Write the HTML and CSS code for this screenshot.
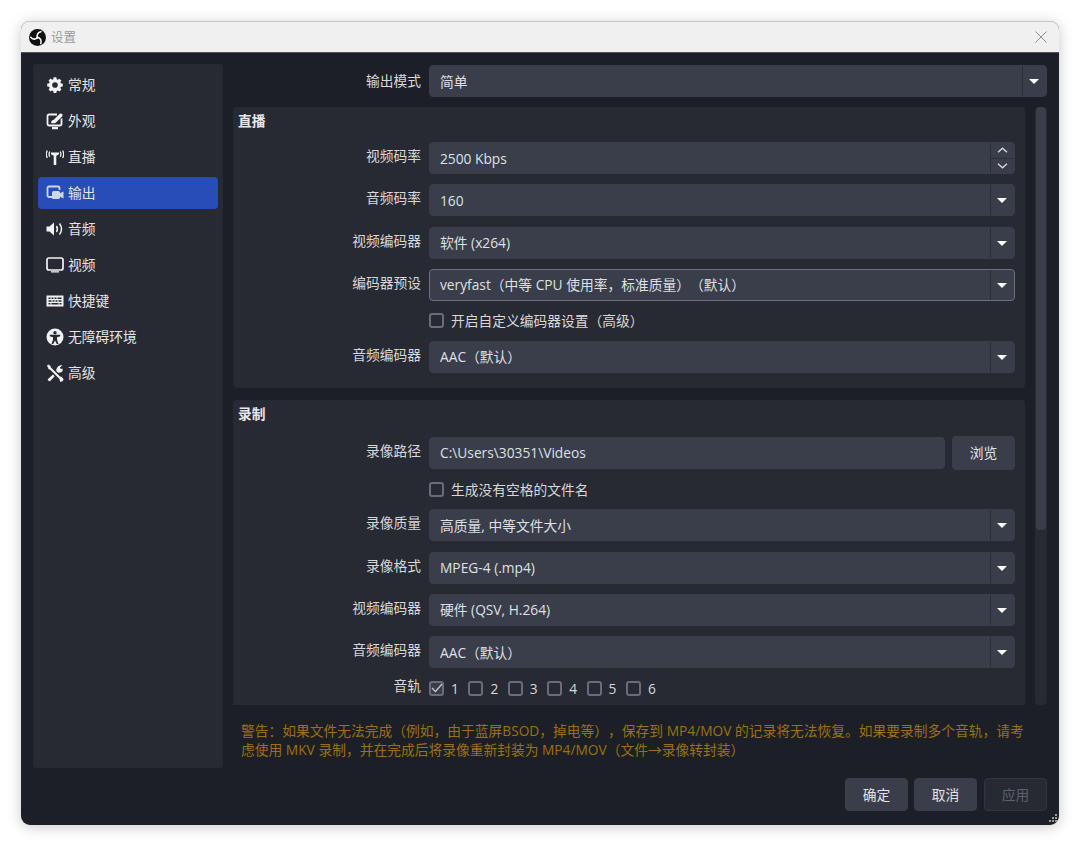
FILE: index.html
```html
<!DOCTYPE html>
<html lang="zh-CN">
<head>
    <meta charset="UTF-8">
    <title>设置</title>
    <link rel="stylesheet" href="styles.css">
</head>
<body>
    <div class="window">
        <div class="titlebar">
            <svg class="obs-logo" width="17" height="17" viewBox="0 0 24 24">
                <circle cx="12" cy="12" r="12" fill="#111"/>
                <g fill="none" stroke="#fff" stroke-width="2.200" stroke-linecap="round">
                    <path d="M12 12.500C10.500 8.500 12.500 4.500 17 3.800"/>
                    <path d="M12 12.500C10.500 8.500 12.500 4.500 17 3.800" transform="rotate(120 12 12)"/>
                    <path d="M12 12.500C10.500 8.500 12.500 4.500 17 3.800" transform="rotate(240 12 12)"/>
                </g>
            </svg>
            <span class="title-text">设置</span>
            <svg class="close-icon" width="12" height="12" viewBox="0 0 12 12">
                <path d="M.5.5l11 11M11.500.5l-11 11" stroke="#8c8c8c" stroke-width="1" fill="none"/>
            </svg>
        </div>

        <div class="dialog">
            <ul class="sidebar">
                <li class="nav-item">
                    <svg class="nav-icon" viewBox="-1.500 -1.500 21 21"><path fill="#f2f2f2" fill-rule="evenodd" d="M7.400 0h3.200l.4 2.300 1.300.6 1.900-1.300 2.300 2.300-1.300 1.900.6 1.300 2.300.4v3.200l-2.300.4-.6 1.300 1.300 1.900-2.300 2.300-1.900-1.300-1.300.6-.4 2.300H7.400l-.4-2.300-1.300-.6-1.900 1.300-2.300-2.300 1.300-1.900-.6-1.300-2.300-.4V7.400l2.300-.4.6-1.300-1.300-1.900 2.300-2.300 1.900 1.300 1.300-.6zM9 5.700a3.300 3.300 0 1 0 0 6.600 3.300 3.300 0 0 0 0-6.600z"/></svg>
                    常规
                </li>
                <li class="nav-item">
                    <svg class="nav-icon" viewBox="0 0 18 18"><path fill="none" stroke="#f2f2f2" stroke-width="1.800" d="M11 2.500H3A1.500 1.500 0 0 0 1.500 4v8A1.500 1.500 0 0 0 3 13.500h11a1.500 1.500 0 0 0 1.500-1.500V6.500"/><path fill="#f2f2f2" d="M6 15h6v2.200H6zM5 11c.2-2 1-2.800 2.500-3L14 1.500l2.500 0.500-.2 2.300L10 10.500c-1.200 1-3 1-5 .5z"/></svg>
                    外观
                </li>
                <li class="nav-item">
                    <svg class="nav-icon" viewBox="0 0 18 18"><g fill="none" stroke="#f2f2f2" stroke-width="1.300"><path d="M3.800 3.500C2.800 5.300 2.800 7 3.800 8.800M1.300 2.500C0 5 0 7.500 1.300 10M14.200 3.500c1 1.800 1 3.500 0 5.300M16.700 2.500C18 5 18 7.500 16.700 10"/></g><path fill="#f2f2f2" d="M5 4.500h8v1.700L10.300 7.800v9.200H7.700V7.800L5 6.200z"/></svg>
                    直播
                </li>
                <li class="nav-item active">
                    <svg class="nav-icon" viewBox="0 0 18 18"><path fill="none" stroke="#cdd6ee" stroke-width="1.800" d="M6 13H3a1.500 1.500 0 0 1-1.500-1.500V4A1.500 1.500 0 0 1 3 2.500h9A1.500 1.500 0 0 1 13.500 4v2"/><path fill="#cdd6ee" d="M6 8.500A1.500 1.500 0 0 1 7.500 7h5A1.500 1.500 0 0 1 14 8.500v.8l3.500-1.800v7l-3.500-1.800v.8a1.500 1.500 0 0 1-1.500 1.500h-5A1.500 1.500 0 0 1 6 13z"/></svg>
                    输出
                </li>
                <li class="nav-item">
                    <svg class="nav-icon" viewBox="0 0 18 18"><path fill="#f2f2f2" d="M.5 6.500h3L8 2.500v13l-4.500-4h-3z"/><g fill="none" stroke="#f2f2f2" stroke-width="1.500"><path d="M10.500 6c1.200 2 1.200 4 0 6"/><path d="M13.500 3.500c2.400 3.300 2.400 7.700 0 11"/></g></svg>
                    音频
                </li>
                <li class="nav-item">
                    <svg class="nav-icon" viewBox="0 0 18 18"><rect x="1" y="2" width="16" height="12" rx="2" fill="none" stroke="#f2f2f2" stroke-width="1.700"/><path fill="#f2f2f2" d="M5 15.200h8v1.300H5z"/></svg>
                    视频
                </li>
                <li class="nav-item">
                    <svg class="nav-icon" viewBox="0 0 18 18"><path fill="#f2f2f2" fill-rule="evenodd" d="M.5 3.500h17v11H.5zM2.500 5.500v1.500h2V5.500zm3 0v1.500h2V5.500zm3 0v1.500h2V5.500zm3 0v1.500h4V5.500zM2.500 8.200v1.500h3V8.200zm4 0v1.500h2V8.200zm3 0v1.500h2V8.200zm3 0v1.500h3V8.200zM2.500 11v1.500h2V11zm3 0v1.500h7V11zm8 0v1.500h2V11z"/></svg>
                    快捷键
                </li>
                <li class="nav-item">
                    <svg class="nav-icon" viewBox="0 0 18 18"><circle cx="9" cy="9" r="8.500" fill="#f2f2f2"/><circle cx="9" cy="4.800" r="1.700" fill="#272a33"/><path fill="#272a33" d="M3.800 6.800h10.400v1.500L11 9.200v2.500l1.500 4.300h-1.700L9 12.500 7.200 16H5.500L7 11.700V9.200L3.800 8.300z"/></svg>
                    无障碍环境
                </li>
                <li class="nav-item">
                    <svg class="nav-icon" viewBox="0 0 18 18"><path fill="#f2f2f2" d="M1 1.500l1.500-1 2 1.500.5 1.500 9 9 1.500.3 2 2.200a2.500 2.500 0 0 1-3.500 2.500l-.5-2.500-9-9L2.500 5zM16.500 1.200l-2.500 2.300.8 1.500 1.800-.3c.5 2-.5 3.500-2.500 3.800l-2 .2-1.800-1.700c-.2-3 2-6.300 6.200-5.800zM7 10.500l1.700 1.700-4.500 4.800c-1 1-3.200-1-2.200-2z"/></svg>
                    高级
                </li>
            </ul>

            <div class="main">
                <div class="form-row top-row">
                    <label class="row-label">输出模式</label>
                    <div class="combo"><span class="combo-text">简单</span><span class="combo-arrow"></span></div>
                </div>

                <div class="scroll-area">
                    <div class="scroll-content">
                        <section class="group">
                            <h2 class="group-title">直播</h2>
                            <div class="form-row">
                                <label class="row-label">视频码率</label>
                                <div class="combo">
                                    <span class="combo-text">2500 Kbps</span>
                                    <span class="spin-btns">
                                        <span class="spin-up"><svg width="11" height="6" viewBox="0 0 11 6"><path d="M1 5.200l4.500-4 4.500 4" fill="none" stroke="#d8d8d8" stroke-width="1.400"/></svg></span>
                                        <span class="spin-down"><svg width="11" height="6" viewBox="0 0 11 6"><path d="M1 .8l4.500 4 4.500-4" fill="none" stroke="#d8d8d8" stroke-width="1.400"/></svg></span>
                                    </span>
                                </div>
                            </div>
                            <div class="form-row">
                                <label class="row-label">音频码率</label>
                                <div class="combo"><span class="combo-text">160</span><span class="combo-arrow"></span></div>
                            </div>
                            <div class="form-row">
                                <label class="row-label">视频编码器</label>
                                <div class="combo"><span class="combo-text">软件 (x264)</span><span class="combo-arrow"></span></div>
                            </div>
                            <div class="form-row">
                                <label class="row-label">编码器预设</label>
                                <div class="combo focused"><span class="combo-text">veryfast（中等 CPU 使用率，标准质量）（默认）</span><span class="combo-arrow"></span></div>
                            </div>
                            <div class="form-row check-row">
                                <span class="check-item"><span class="checkbox"></span>开启自定义编码器设置（高级）</span>
                            </div>
                            <div class="form-row">
                                <label class="row-label">音频编码器</label>
                                <div class="combo"><span class="combo-text">AAC（默认）</span><span class="combo-arrow"></span></div>
                            </div>
                        </section>

                        <section class="group record-group">
                            <h2 class="group-title">录制</h2>
                            <div class="form-row">
                                <label class="row-label">录像路径</label>
                                <div class="combo"><span class="combo-text">C:\Users\30351\Videos</span></div>
                                <button class="btn browse-btn">浏览</button>
                            </div>
                            <div class="form-row check-row">
                                <span class="check-item"><span class="checkbox"></span>生成没有空格的文件名</span>
                            </div>
                            <div class="form-row">
                                <label class="row-label">录像质量</label>
                                <div class="combo"><span class="combo-text">高质量, 中等文件大小</span><span class="combo-arrow"></span></div>
                            </div>
                            <div class="form-row">
                                <label class="row-label">录像格式</label>
                                <div class="combo"><span class="combo-text">MPEG-4 (.mp4)</span><span class="combo-arrow"></span></div>
                            </div>
                            <div class="form-row">
                                <label class="row-label">视频编码器</label>
                                <div class="combo"><span class="combo-text">硬件 (QSV, H.264)</span><span class="combo-arrow"></span></div>
                            </div>
                            <div class="form-row">
                                <label class="row-label">音频编码器</label>
                                <div class="combo"><span class="combo-text">AAC（默认）</span><span class="combo-arrow"></span></div>
                            </div>
                            <div class="form-row track-row">
                                <label class="row-label">音轨</label>
                                <div class="tracks">
                                    <span class="check-item"><span class="checkbox checked"><svg width="12" height="10" viewBox="0 0 12 10"><path d="M1 5l3.500 3.500L11 1" fill="none" stroke="#c8c8c8" stroke-width="1.300"/></svg></span>1</span>
                                    <span class="check-item"><span class="checkbox"></span>2</span>
                                    <span class="check-item"><span class="checkbox"></span>3</span>
                                    <span class="check-item"><span class="checkbox"></span>4</span>
                                    <span class="check-item"><span class="checkbox"></span>5</span>
                                    <span class="check-item"><span class="checkbox"></span>6</span>
                                </div>
                            </div>
                        </section>
                    </div>
                    <div class="scrollbar"><div class="scroll-thumb"></div></div>
                </div>

                <p class="warning">警告：如果文件无法完成（例如，由于蓝屏BSOD，掉电等），保存到 MP4/MOV 的记录将无法恢复。如果要录制多个音轨，请考<br>虑使用 MKV 录制，并在完成后将录像重新封装为 MP4/MOV（文件→录像转封装）</p>
            </div>

            <div class="button-row">
                <button class="btn">确定</button>
                <button class="btn">取消</button>
                <button class="btn disabled">应用</button>
            </div>
        </div>

        <svg class="grip" width="12" height="12" viewBox="0 0 12 12">
            <path fill="#9c9c9c" d="M8 1h2v2H8zM5 4h2v2H5zM8 4h2v2H8zM2 7h2v2H2zM5 7h2v2H5zM8 7h2v2H8z"/>
        </svg>
    </div>
</body>
</html>
```

FILE: styles.css
```css
* {
    margin: 0;
    padding: 0;
    box-sizing: border-box;
}

body {
    font-family: "Open Sans", "Noto Sans CJK SC", sans-serif;
    font-size: 13.75px;
    line-height: 19px;
    text-spacing-trim: space-all;
    background-color: #fff;
    color: #e4e4e6;
    padding: 21px;
    overflow: hidden;
}

.window {
    position: relative;
    width: 1038px;
    height: 804px;
    border-radius: 9px;
    overflow: hidden;
    background: #1d1f27;
    box-shadow: 0 2px 14px rgba(0, 0, 0, 0.22);
    display: flex;
    flex-direction: column;
}

.titlebar {
    height: 32px;
    flex: none;
    background: #f0f0f0;
    border-top: 1px solid #c8c8c8;
    border-bottom: 1px solid #55565a;
    display: flex;
    align-items: center;
    padding: 0 12px 0 8px;
}

.title-text {
    margin-left: 5px;
    font-size: 12.5px;
    color: #9a9a9a;
}

.close-icon {
    margin-left: auto;
    margin-right: 0;
}

.dialog {
    flex: 1;
    min-height: 0;
    display: grid;
    grid-template-columns: 190px 814px;
    grid-template-rows: 704px 1fr;
    column-gap: 10px;
    padding: 11px 12px 0;
}

/* left navigation */
.sidebar {
    list-style: none;
    background: #272a33;
    border-radius: 4px;
    padding: 5px;
    display: flex;
    flex-direction: column;
    gap: 4px;
}

.nav-item {
    height: 32px;
    display: flex;
    align-items: center;
    gap: 4px;
    padding: 0 8px 1px;
    border-radius: 4px;
    color: #e4e4e6;
}

.nav-item.active {
    background: #284cb8;
}

.nav-icon {
    width: 18px;
    height: 18px;
    flex: none;
}

/* right side */
.main {
    display: flex;
    flex-direction: column;
    min-height: 0;
}

.form-row {
    display: flex;
    align-items: center;
    gap: 8px;
    padding-left: 196px;
    position: relative;
    margin-bottom: 10.33px;
}

.row-label {
    position: absolute;
    left: 0;
    width: 188px;
    text-align: right;
    top: 50%;
    margin-top: -12px;
    color: #d8d8da;
}

.form-row:last-child {
    margin-bottom: 0;
}

.top-row {
    margin-bottom: 10px;
    margin-top: 1px;
}

.top-row .row-label {
    margin-top: -10px;
}

.combo {
    flex: 1;
    height: 32px;
    background: #3a3d4a;
    border: 1px solid #3a3d4a;
    border-radius: 4px;
    display: flex;
    align-items: center;
    justify-content: space-between;
    min-width: 0;
}

.combo.focused {
    border-color: #6b6f7e;
}

.combo-text {
    padding-left: 10px;
    color: #dfe0e4;
}

.combo-arrow {
    width: 24px;
    height: 100%;
    border-left: 1px solid #2b2e38;
    position: relative;
    flex: none;
}

.combo-arrow::after {
    content: "";
    position: absolute;
    left: 6px;
    top: 13px;
    border-left: 5px solid transparent;
    border-right: 5px solid transparent;
    border-top: 5px solid #fff;
}

.spin-btns {
    width: 24px;
    height: 100%;
    border-left: 1px solid #2b2e38;
    display: flex;
    flex-direction: column;
    flex: none;
}

.spin-up, .spin-down {
    flex: 1;
    display: flex;
    align-items: center;
    justify-content: center;
}

.spin-up {
    border-bottom: 1px solid #2b2e38;
}

.scroll-area {
    flex: 1;
    min-height: 0;
    display: flex;
    gap: 10px;
    overflow: hidden;
}

.scroll-content {
    width: 792px;
    flex: none;
    display: flex;
    flex-direction: column;
    gap: 12px;
}

.group {
    background: #272a33;
    border-radius: 4px;
    padding: 4px 10px 15px 0;
    flex: none;
}

.group-title {
    font-size: 13.75px;
    font-weight: bold;
    padding-left: 5px;
    margin-bottom: 12px;
    color: #e8e8ea;
}

.record-group .group-title {
    margin-bottom: 13px;
}

.check-row {
    height: 19px;
}

.track-row {
    height: 19px;
}

.check-item {
    display: inline-flex;
    align-items: center;
    gap: 7px;
    color: #d8d8da;
}

.checkbox {
    width: 15px;
    height: 15px;
    border: 2px solid #6a6d78;
    border-radius: 3px;
    display: inline-flex;
    align-items: center;
    justify-content: center;
    flex: none;
}

.checkbox.checked {
    background: #3a3d4a;
}

.checkbox svg {
    flex: none;
}

.tracks {
    display: flex;
    gap: 9.5px;
}

.btn {
    font-family: inherit;
    font-size: 13.75px;
    width: 63px;
    height: 33px;
    padding: 0 0 2px;
    background: #3a3d4a;
    border: 1px solid #3a3d4a;
    border-radius: 4px;
    color: #e4e4e6;
    cursor: pointer;
    flex: none;
}

.btn.disabled {
    background: #272a33;
    border-color: #32353f;
    color: #5e616b;
}

.browse-btn {
    height: 34px;
    margin-left: -1px;
}

.scrollbar {
    flex: 1;
    background: #272a33;
    border-radius: 4px;
}

.scroll-thumb {
    width: 10px;
    height: 423px;
    margin-left: 1px;
    background: #3a3d4a;
    border-radius: 4px;
}

.warning {
    flex: none;
    height: 63px;
    padding: 16px 0 0 8px;
    color: #9c7210;
}

.button-row {
    grid-column: 2;
    display: flex;
    justify-content: flex-end;
    gap: 6px;
    padding-top: 10px;
}

.button-row .btn:last-child {
    margin-left: 1px;
}

.grip {
    position: absolute;
    right: 0;
    bottom: 0;
}
```
